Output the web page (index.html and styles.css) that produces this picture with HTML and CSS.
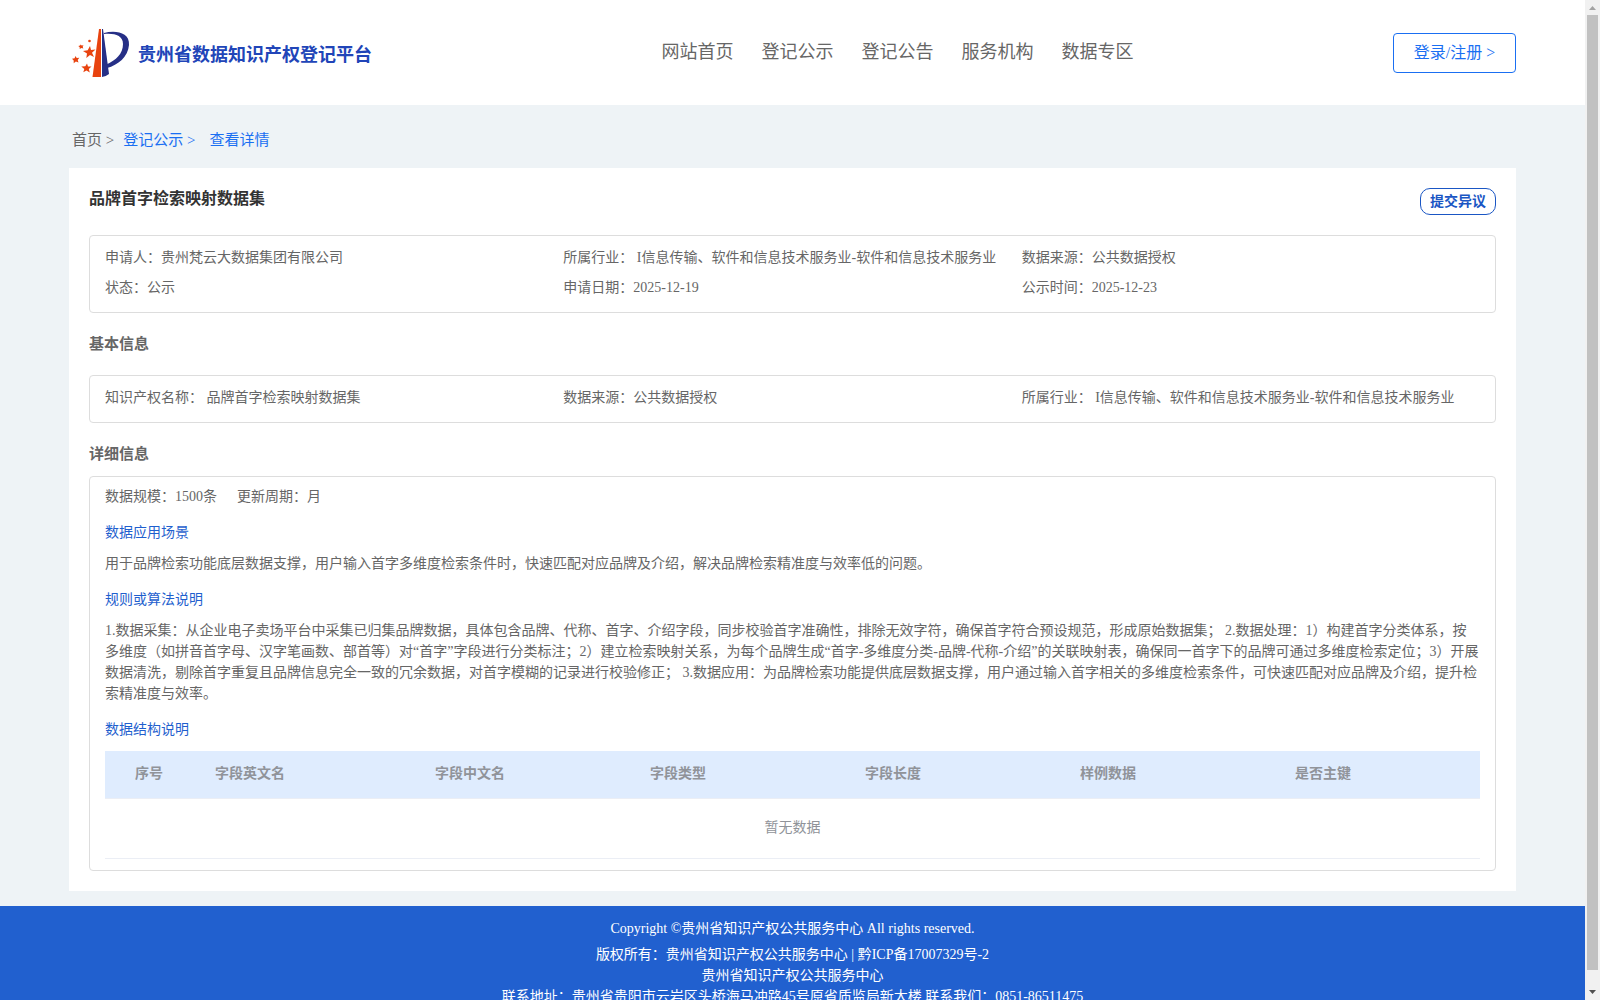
FILE: index.html
```html
<!DOCTYPE html>
<html lang="zh-CN">
<head>
    <meta charset="UTF-8">
    <meta name="viewport" content="width=device-width, initial-scale=1.0">
    <title>贵州省数据知识产权登记平台</title>
    <link rel="stylesheet" href="styles.css">
</head>
<body>
    <div class="page">
        <header class="header">
            <a class="brand" href="#">
                <svg class="logo" viewBox="0 0 58 50" aria-hidden="true">
                    <path fill="#e8430f" d="M27 1h2v48h-8.500z"/>
                    <path fill="#262f86" d="M30 1h1l6 45q-3 2.500-7 3z"/>
                    <path fill="#262f86" d="M32 5C43 2 58 4 57 17 56 29 46 37 35 40l-.5-3.500C44 32 51 26 51 16 51 7 42 5 32 6z"/>
                    <path fill="#e8430f" d="M18 18l1 4 4.500-.5-3.500 3.200 2 4.300-4-2-3.700 3 .7-4.500-4-2.500 4.700-.7z"/>
                    <path fill="#e8430f" d="M3.500 28l1.200 2 2.600-.2-1.600 2.100.8 2.600-2.600-.9-2.200 1.600v-2.700L0 30.800l2.600-.6z"/>
                    <path fill="#e8430f" d="M15 35.500l1 3h3.500l-2.700 2.400 1 3.600-3.300-2-3.200 1.800 1-3.400-3-2.500 4-.1z"/>
                    <path fill="#e8430f" d="M8.500 16.500l1.200 1 1.800-.2-.8 1.500.6 1.700-1.900-.4-1.700 1v-1.900l-1.400-1.300 1.800-.4z"/>
                    <circle fill="#e8430f" cx="17.500" cy="13" r="1.300"/>
                </svg>
                <span class="brand-name">贵州省数据知识产权登记平台</span>
            </a>
            <nav class="nav">
                <a href="#">网站首页</a>
                <a href="#">登记公示</a>
                <a href="#">登记公告</a>
                <a href="#">服务机构</a>
                <a href="#">数据专区</a>
            </nav>
            <button class="login" type="button">登录/注册 &gt;</button>
        </header>

        <main class="main">
            <div class="breadcrumb">
                <a class="home" href="#">首页 &gt;</a>
                <a href="#">登记公示 &gt;</a>
                <a class="current" href="#">查看详情</a>
            </div>

            <div class="card">
                <div class="card-head">
                    <h1>品牌首字检索映射数据集</h1>
                    <button class="objection" type="button">提交异议</button>
                </div>

                <div class="box info">
                    <div>申请人：贵州梵云大数据集团有限公司</div>
                    <div>所属行业： I信息传输、软件和信息技术服务业-软件和信息技术服务业</div>
                    <div>数据来源：公共数据授权</div>
                    <div>状态：公示</div>
                    <div>申请日期：2025-12-19</div>
                    <div>公示时间：2025-12-23</div>
                </div>

                <h2 class="basic-title">基本信息</h2>
                <div class="box info">
                    <div>知识产权名称： 品牌首字检索映射数据集</div>
                    <div>数据来源：公共数据授权</div>
                    <div>所属行业： I信息传输、软件和信息技术服务业-软件和信息技术服务业</div>
                </div>

                <h2 class="detail-title">详细信息</h2>
                <div class="box detail">
                    <div class="scale">
                        <span>数据规模：1500条</span>
                        <span>更新周期：月</span>
                    </div>
                    <h3>数据应用场景</h3>
                    <p>用于品牌检索功能底层数据支撑，用户输入首字多维度检索条件时，快速匹配对应品牌及介绍，解决品牌检索精准度与效率低的问题。</p>
                    <h3>规则或算法说明</h3>
                    <p>1.数据采集：从企业电子卖场平台中采集已归集品牌数据，具体包含品牌、代称、首字、介绍字段，同步校验首字准确性，排除无效字符，确保首字符合预设规范，形成原始数据集； 2.数据处理：1）构建首字分类体系，按多维度（如拼音首字母、汉字笔画数、部首等）对“首字”字段进行分类标注；2）建立检索映射关系，为每个品牌生成“首字-多维度分类-品牌-代称-介绍”的关联映射表，确保同一首字下的品牌可通过多维度检索定位；3）开展数据清洗，剔除首字重复且品牌信息完全一致的冗余数据，对首字模糊的记录进行校验修正； 3.数据应用：为品牌检索功能提供底层数据支撑，用户通过输入首字相关的多维度检索条件，可快速匹配对应品牌及介绍，提升检索精准度与效率。</p>
                    <h3>数据结构说明</h3>
                    <table class="fields">
                        <thead>
                            <tr>
                                <th class="index">序号</th>
                                <th class="en-name">字段英文名</th>
                                <th>字段中文名</th>
                                <th>字段类型</th>
                                <th>字段长度</th>
                                <th>样例数据</th>
                                <th class="key">是否主键</th>
                            </tr>
                        </thead>
                        <tbody>
                            <tr>
                                <td class="empty" colspan="7">暂无数据</td>
                            </tr>
                        </tbody>
                    </table>
                </div>
            </div>
        </main>

        <footer class="footer">
            <p class="copyright">Copyright ©贵州省知识产权公共服务中心 All rights reserved.</p>
            <p>版权所有：贵州省知识产权公共服务中心 | 黔ICP备17007329号-2</p>
            <p>贵州省知识产权公共服务中心</p>
            <p>联系地址：贵州省贵阳市云岩区头桥海马冲路45号原省质监局新大楼 联系我们：0851-86511475</p>
        </footer>
    </div>

    <div class="scrollbar" aria-hidden="true">
        <svg class="arrow up" viewBox="0 0 7 4"><path d="M0 4h7L3.500 0z"/></svg>
        <div class="thumb"></div>
        <svg class="arrow down" viewBox="0 0 7 4"><path d="M0 0h7L3.500 4z"/></svg>
    </div>
</body>
</html>
```

FILE: styles.css
```css
* {
    box-sizing: border-box;
}
body {
    display: flex;
    height: 100vh;
    margin: 0;
    color: #666666;
    background-color: #eef3f6;
    font-family: "Liberation Serif", "Noto Sans CJK SC", serif;
    font-size: 14px;
    line-height: 21px;
    text-spacing-trim: space-all;
}
h1, h2, h3, p {
    margin: 0;
}
a {
    color: inherit;
    text-decoration: none;
}
button {
    font-family: inherit;
    background-color: #ffffff;
    cursor: pointer;
}

/* page scrolls inside its own area, with its own bar */
.page {
    flex: 1;
    min-width: 0;
    overflow-y: auto;
    scrollbar-width: none;
}
.scrollbar {
    display: flex;
    flex-direction: column;
    width: 15px;
    padding: 6px 2px;
    background-color: #f1f1f1;
}
.thumb {
    flex: 1;
    margin: 5px 0 20px;
    background-color: #c1c1c1;
}
.arrow {
    align-self: center;
    width: 7px;
    height: 4px;
}
.up {
    fill: #a3a3a3;
}
.down {
    fill: #505050;
}

/* header */
.header {
    display: grid;
    grid-template-columns: 1fr auto 1fr;
    align-items: center;
    height: 105px;
    padding: 0 69px;
    background-color: #ffffff;
}
.brand {
    display: flex;
    align-items: center;
    gap: 8px;
    padding-left: 3px;
}
.logo {
    width: 58px;
    height: 50px;
}
.brand-name {
    padding-top: 6px;
    color: #2145b8;
    font-size: 18px;
    font-weight: bold;
}
.nav {
    display: flex;
    gap: 28px;
    padding-left: 210px;
    font-size: 18px;
}
.login {
    justify-self: end;
    width: 123px;
    height: 40px;
    padding: 0 0 3px;
    color: #1a6ff2;
    border: 1px solid #1a6ff2;
    border-radius: 4px;
    font-size: 16px;
}

/* content */
.main {
    padding: 0 69px 15px;
}
.breadcrumb {
    display: flex;
    align-items: center;
    gap: 9px;
    height: 63px;
    padding: 8px 3px 0;
    color: #1a6ff2;
    font-size: 15px;
}
.breadcrumb .home {
    color: #666666;
}
.breadcrumb .current {
    padding-left: 5px;
}
.card {
    padding: 20px;
    background-color: #ffffff;
}
.card-head {
    display: flex;
    justify-content: space-between;
    align-items: flex-start;
    height: 47px;
}
.card-head h1 {
    color: #333333;
    font-size: 16px;
    line-height: 22px;
}
.objection {
    width: 76px;
    height: 27px;
    padding: 0 0 4px;
    color: #1a56c4;
    border: 1px solid #1a56c4;
    border-radius: 10px;
    font-size: 14px;
    font-weight: bold;
}
.box {
    border: 1px solid #dddddd;
    border-radius: 4px;
}
.info {
    display: grid;
    grid-template-columns: repeat(3, 1fr);
    padding: 7px 15px 9px;
    line-height: 30px;
}
h2 {
    font-size: 15px;
    line-height: 22px;
}
.basic-title {
    padding: 20px 0;
}
.detail-title {
    padding: 20px 0 11px;
}
.detail {
    padding: 9px 15px 11px;
}
.scale {
    display: flex;
    gap: 20px;
}
.detail h3 {
    margin: 15px 0 10px;
    color: #1f5fce;
    font-size: 14px;
    font-weight: normal;
}

/* field table */
.fields {
    width: 100%;
    margin-top: 11px;
    table-layout: fixed;
    border-collapse: separate;
    border-spacing: 0;
    color: #909399;
}
.fields th {
    width: 215px;
    height: 48px;
    padding: 0 10px 2px;
    background-color: #dfecfe;
    border-bottom: 1px solid #ebeef5;
    text-align: left;
}
.fields .index {
    width: 100px;
    padding-left: 30px;
}
.fields .en-name {
    width: 220px;
}
.fields .key {
    width: auto;
}
.fields .empty {
    height: 60px;
    padding: 0 0 2px;
    border-bottom: 1px solid #ebeef5;
    text-align: center;
}

/* footer */
.footer {
    padding: 12px 0 10px;
    color: #ffffff;
    background-color: #2160cf;
    text-align: center;
}
.copyright {
    padding-bottom: 5px;
}
```
